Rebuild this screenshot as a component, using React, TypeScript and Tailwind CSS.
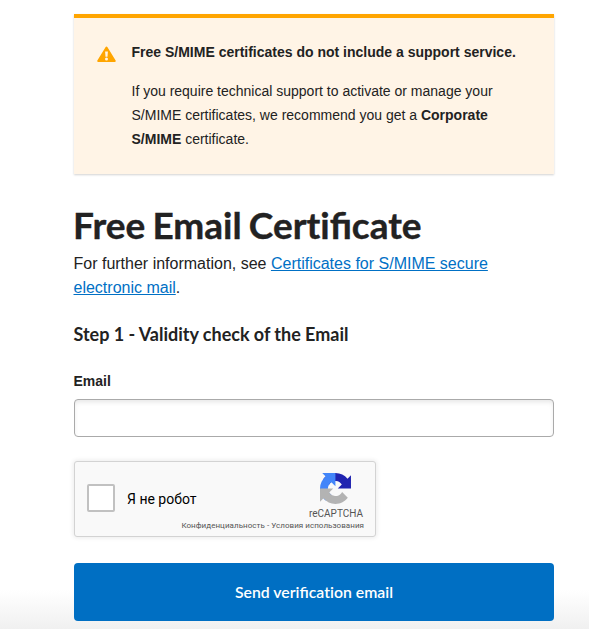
function WarningIcon() {
  return (
    <svg className="mt-[6px] h-[17px] w-[20px] shrink-0" viewBox="0 0 20 17">
      <path d="M9.5 1.5 17.8 15H1.2Z" fill="#ffa500" stroke="#ffa500" strokeWidth="2" strokeLinejoin="round" />
      <path d="M8.1 5.6h2.8l-.4 5.1H8.5Z" fill="#fff4e6" />
      <circle cx="9.5" cy="12.9" r="1.5" fill="#fff4e6" />
    </svg>
  );
}

function CaptchaLogo() {
  return (
    <svg className="h-[31px] w-[31px]" viewBox="0 0 64 64">
      <path d="M64 31.955l-.033-1.37V4.687l-7.16 7.16C50.948 4.674 42.033.093 32.05.093c-10.4 0-19.622 4.96-25.458 12.64l11.736 11.86a15.55 15.55 0 0 1 4.754-5.334c2.05-1.6 4.952-2.906 8.968-2.906.485 0 .86.057 1.135.163 4.976.393 9.288 3.14 11.828 7.124l-8.307 8.307L64 31.953" fill="#2024b0" />
      <path d="M31.862.094l-1.37.033H4.594l7.16 7.16C4.58 13.147 0 22.06 0 32.046c0 10.4 4.96 19.622 12.64 25.458L24.5 45.768a15.55 15.55 0 0 1-5.334-4.754c-1.6-2.05-2.906-4.952-2.906-8.968 0-.485.057-.86.163-1.135.393-4.976 3.14-9.288 7.124-11.828l8.307 8.307L31.86.095" fill="#4285f9" />
      <path d="M.001 32.045l.033 1.37v25.898l7.16-7.16c5.86 7.173 14.774 11.754 24.76 11.754 10.4 0 19.622-4.96 25.458-12.64l-11.736-11.86a15.55 15.55 0 0 1-4.754 5.334c-2.05 1.6-4.952 2.906-8.968 2.906-.485 0-.86-.057-1.135-.163-4.976-.393-9.288-3.14-11.828-7.124l8.307-8.307c-10.522.04-22.4.066-27.295-.005" fill="#b3b3b3" />
    </svg>
  );
}

function Alert() {
  return (
    <section className="flex h-[160px] gap-[14.5px] border-t-4 border-[#ffa500] bg-[#fff4e6] pt-[22px] pr-6 pl-[23px] text-sm leading-6 shadow-[0_1px_2px_rgba(0,0,0,0.18)]">
      <WarningIcon />
      <div>
        <p className="whitespace-nowrap font-bold">Free S/MIME certificates do not include a support service.</p>
        <p className="mt-[15px] whitespace-nowrap">
          If you require technical support to activate or manage your
          <br />
          S/MIME certificates, we recommend you get a <b>Corporate</b>
          <br />
          <b>S/MIME</b> certificate.
        </p>
      </div>
    </section>
  );
}

function Captcha() {
  return (
    <div className="mt-6 flex h-[76px] w-[302px] flex-col rounded-[3px] border border-[#d3d3d3] bg-[#f9f9f9] font-[Roboto,sans-serif] shadow-[0_0_4px_1px_rgba(0,0,0,0.08)]">
      <div className="flex h-[58px] pl-3">
        <span className="mt-[22px] h-7 w-7 rounded-[2px] border-2 border-[#c1c1c1] bg-white" />
        <span className="mt-[29px] ml-3 text-sm leading-[17px] text-black">Я не робот</span>
        <div className="mt-[11px] mr-3 ml-auto flex flex-col items-center">
          <CaptchaLogo />
          <span className="mt-[4px] text-[10px] leading-[12px] text-[#555]">reCAPTCHA</span>
        </div>
      </div>
      <div className="pt-px pr-[11px] text-right text-[8px] leading-[10px] tracking-[0.05px] whitespace-nowrap text-[#555]">
        Конфиденциальность - Условия использования
      </div>
    </div>
  );
}

/* A "t" that never joins the following "i", while "fi" keeps its ligature. */
function PlainT() {
  return <span className="[font-variant-ligatures:none]">t</span>;
}

export default function App() {
  return (
    <main className="h-[629px] overflow-hidden bg-[linear-gradient(to_bottom,#fff_0,#fff_590px,#f0f0f0_629px)] pt-[14px] pr-[35px] pl-[74px] font-['Liberation_Sans',Arial,sans-serif] text-[#222]">
      <Alert />
      <h1 className="mt-[27px] -ml-px text-[37px] leading-[48px] font-bold [-webkit-text-stroke:0.4px_#222] [word-spacing:-1.8px] whitespace-nowrap font-[Lato,sans-serif]">
        Free Email Cer<PlainT />ificate
      </h1>
      <p className="mt-[3px] -ml-[0.5px] text-base leading-6 whitespace-nowrap">
        For further information, see{' '}
        <a href="#" className="text-[#0070c5] underline">
          Certificates for S/MIME secure
          <br />
          electronic mail
        </a>
        .
      </p>
      <h2 className="mt-[22px] -ml-[0.5px] text-lg leading-6 font-bold [word-spacing:-0.1px] whitespace-nowrap font-[Lato,sans-serif]">Step 1 - Validity check of the Email</h2>
      <label htmlFor="email" className="mt-[23px] -ml-[0.5px] block text-sm leading-6 font-bold">Email</label>
      <input id="email" className="mt-[6px] block h-[38px] w-full rounded-[4px] border border-[#aaa] bg-white px-3 shadow-[inset_0_3px_5px_-1px_rgba(0,0,0,0.1)]" />
      <Captcha />
      <button className="mt-[26px] block h-[58px] w-full rounded-[4px] bg-[#006fc3] text-[15.8px] leading-6 font-semibold text-white font-[Lato,sans-serif]">
        Send verifica<PlainT />ion email
      </button>
    </main>
  );
}
